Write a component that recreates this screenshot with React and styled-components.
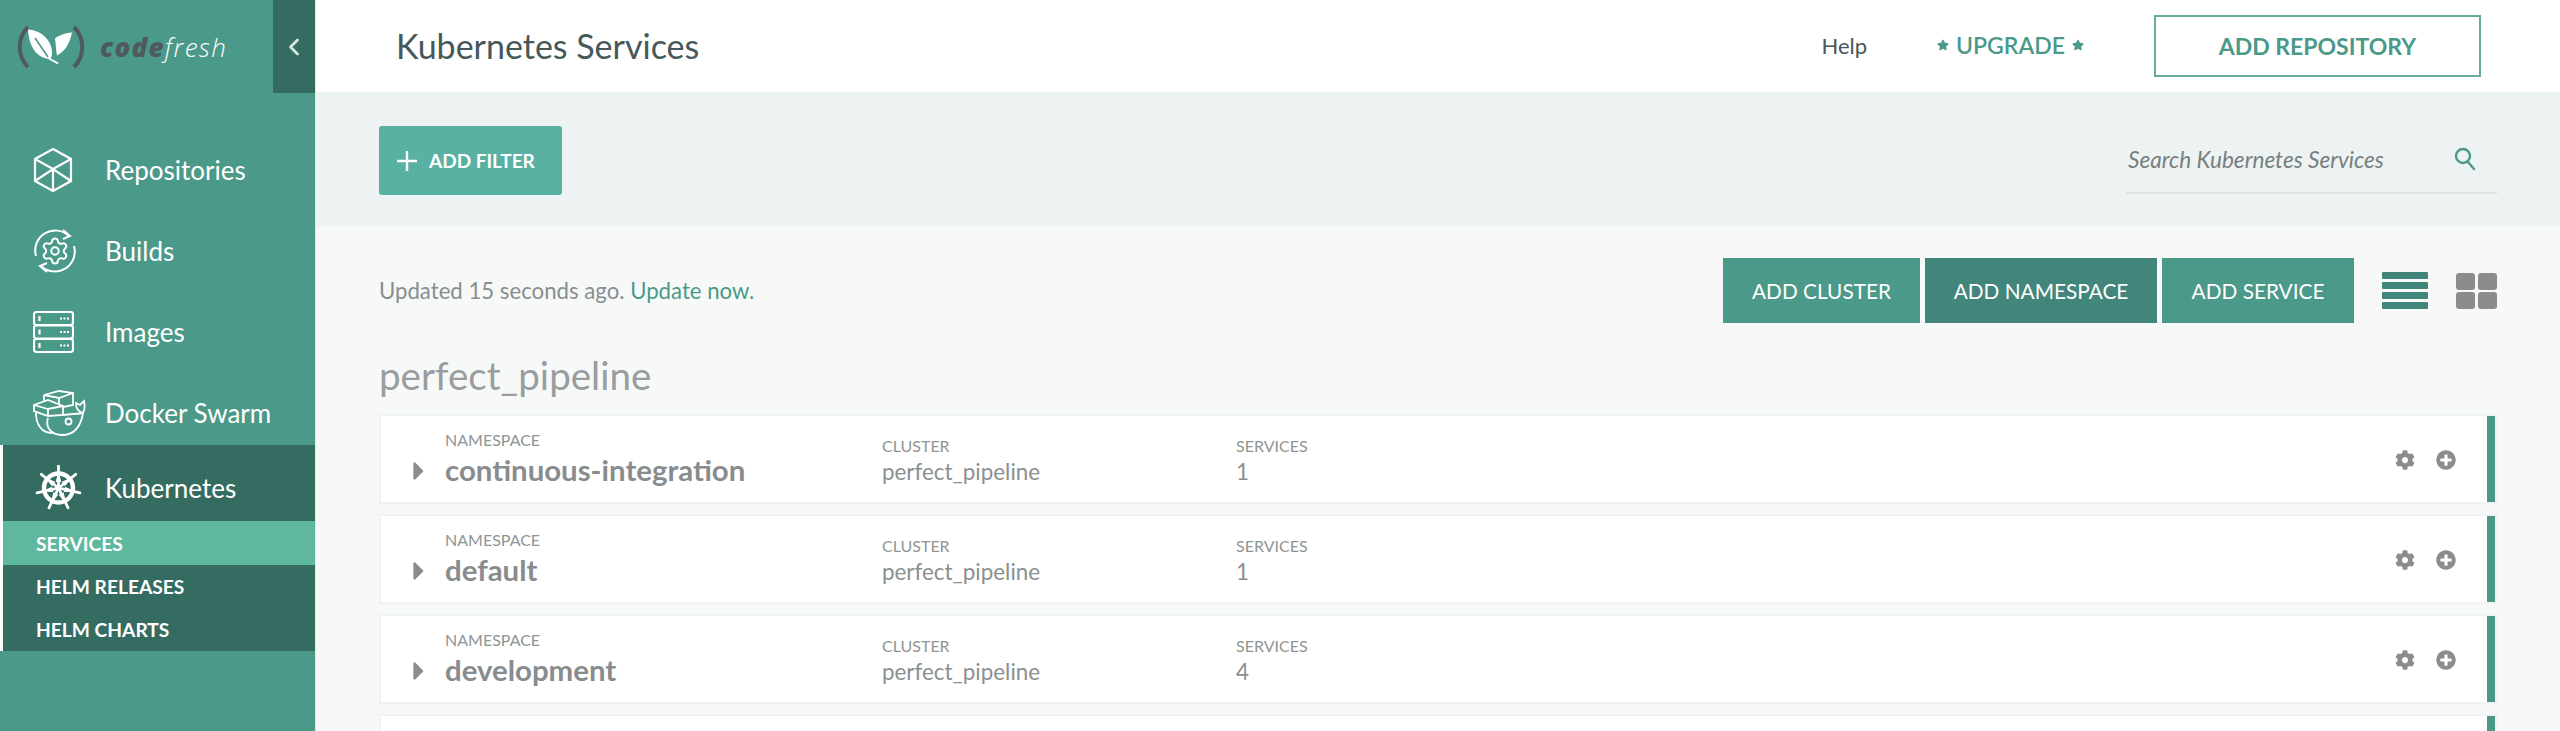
import React from "react";
import styled, { createGlobalStyle } from "styled-components";
import { ChevronLeft, Settings } from "lucide-react";
import { FaCog, FaPlusCircle, FaCaretRight, FaStar } from "react-icons/fa";

const GlobalStyle = createGlobalStyle`
  html, body {
    margin: 0;
    height: 100%;
    overflow: hidden;
  }
  body {
    font-family: Lato, "Liberation Sans", sans-serif;
    background: #f7f9f9;
  }
  * {
    box-sizing: border-box;
  }
`;

const Page = styled.div`
  display: flex;
  width: 2560px;
  height: 731px;
  overflow: hidden;
`;

const Sidebar = styled.aside`
  width: 316px;
  flex: none;
  background: #4b9989;
  border-right: 1px solid #dfeae8;
  color: #fff;
`;

const LogoBar = styled.div`
  display: flex;
  align-items: center;
  height: 93px;
  padding-left: 16px;
`;

const LogoWord = styled.div`
  margin-left: 14px;
  font-family: "Open Sans", sans-serif;
  font-style: italic;
  font-size: 26px;
  letter-spacing: 1.3px;
  color: #fff;
  font-weight: 300;
  span {
    font-weight: 800;
    color: #4f5a5c;
  }
`;

const Collapse = styled.div`
  margin-left: auto;
  width: 42px;
  height: 93px;
  background: #356c62;
  color: #d5e6e2;
  display: flex;
  align-items: center;
  justify-content: center;
`;

const Nav = styled.nav`
  display: flex;
  flex-direction: column;
  gap: 15px;
  padding-top: 44px;
`;

const NavItem = styled.a`
  display: flex;
  align-items: center;
  height: 66px;
  padding-left: 33px;
  font-size: 26px;
  color: #fff;
  svg {
    display: block;
  }
`;

const NavIcon = styled.span`
  width: 72px;
  flex: none;
`;

const KubeGroup = styled.div`
  margin-top: -1px;
  border-left: 3px solid #fff;
  background: #356c62;
`;

const KubeHead = styled.a`
  display: flex;
  align-items: center;
  height: 76px;
  padding: 10px 0 0 30px;
  font-size: 26px;
  svg {
    display: block;
    margin-left: 2px;
  }
`;

const SubItem = styled.a`
  display: flex;
  align-items: center;
  height: ${(p) => (p.$active ? "44px" : "43px")};
  padding-left: 33px;
  font-size: 19.2px;
  font-weight: 700;
  background: ${(p) => (p.$active ? "#5fb89e" : "transparent")};
`;

const Main = styled.main`
  flex: 1;
  min-width: 0;
  display: flex;
  flex-direction: column;
`;

const Header = styled.header`
  display: flex;
  align-items: center;
  height: 92px;
  flex: none;
  padding: 0 79px 2px 80px;
  background: #fff;
`;

const Title = styled.h1`
  margin: 0;
  font-size: 34px;
  font-weight: 400;
  color: #46585a;
`;

const HeaderLinks = styled.div`
  margin-left: auto;
  display: flex;
  align-items: center;
  gap: 70px;
`;

const Help = styled.a`
  font-size: 22px;
  color: #4a5557;
`;

const Upgrade = styled.a`
  display: flex;
  align-items: center;
  gap: 7px;
  font-size: 23px;
  font-weight: 600;
  color: #4b9989;
  svg {
    font-size: 12px;
  }
`;

const OutlineButton = styled.button`
  width: 327px;
  height: 62px;
  margin-top: 2px;
  border: 2px solid #6aa99e;
  background: #fff;
  color: #4b9989;
  font-family: inherit;
  font-size: 23px;
  font-weight: 700;
`;

const FilterBar = styled.div`
  display: flex;
  align-items: flex-start;
  justify-content: space-between;
  height: 134px;
  flex: none;
  padding: 34px 63px;
  background: #ecf3f2;
`;

const FilterButton = styled.button`
  display: flex;
  align-items: center;
  gap: 12px;
  width: 183px;
  height: 69px;
  padding: 0 0 0 18px;
  border: 0;
  border-radius: 3px;
  background: #58b1a3;
  color: #fff;
  font-family: inherit;
  font-size: 19px;
  font-weight: 700;
`;

const Search = styled.div`
  display: flex;
  align-items: center;
  justify-content: space-between;
  width: 371px;
  height: 68px;
  padding: 0 21px 0 2px;
  border-bottom: 2px solid #dde3e3;
  font-size: 22.6px;
  font-style: italic;
  color: #787f80;
`;

const Content = styled.section`
  flex: 1;
  padding: 32px 63px 0;
`;

const Toolbar = styled.div`
  display: flex;
  align-items: center;
  height: 65px;
`;

const Updated = styled.p`
  margin: 0;
  font-size: 22.2px;
  color: #888e8e;
  a {
    color: #4b9989;
  }
`;

const Actions = styled.div`
  margin-left: auto;
  margin-right: 1px;
  display: flex;
  gap: 5px;
`;

const ActionButton = styled.button`
  width: ${(p) => p.$w}px;
  height: 65px;
  border: 0;
  background: ${(p) => (p.$dark ? "#42857a" : "#4b9989")};
  color: #fff;
  font-family: inherit;
  font-size: 20.8px;
`;

const ViewToggles = styled.div`
  display: flex;
  align-items: center;
  gap: 28px;
  margin-left: 27px;
`;

const LinesIcon = styled.div`
  display: grid;
  grid-auto-rows: 7px;
  gap: 3px;
  width: 46px;
  span {
    background: #42857a;
    border-radius: 1px;
  }
`;

const GridIcon = styled.div`
  display: grid;
  grid-template-columns: 19px 19px;
  grid-auto-rows: 17px;
  gap: 2px 3px;
  span {
    background: #8a8d8c;
    border-radius: 3px;
  }
`;

const GroupName = styled.h2`
  margin: 30px 0 0;
  height: 61px;
  font-size: 38.6px;
  line-height: 44px;
  font-weight: 400;
  color: #999d9d;
`;

const List = styled.div`
  display: flex;
  flex-direction: column;
  gap: 10px;
`;

const Row = styled.div`
  display: grid;
  grid-template-columns: 33px 437px 354px 1fr auto;
  align-items: end;
  height: 90px;
  padding: 0 39px 14px 31px;
  border: 2px solid #f0f3f3;
  background: #fff;
  box-shadow: inset -8px 0 0 #4b9989;
  color: #888e8e;
`;

const Caret = styled.span`
  display: flex;
  height: 34px;
  align-items: center;
  margin-left: -8px;
  font-size: 30px;
  color: #8a8d8c;
`;

const Cell = styled.div`
  display: flex;
  flex-direction: column;
`;

const Label = styled.span`
  font-size: 16px;
  line-height: 20px;
  color: #8f9595;
`;

const Name = styled.span`
  font-size: 29.4px;
  line-height: 36px;
  margin-top: 2px;
  font-weight: 700;
  color: #888c8c;
`;

const Value = styled.span`
  font-size: 22.4px;
  line-height: 32px;
  color: #8a9090;
`;

const RowIcons = styled.div`
  display: flex;
  align-items: center;
  gap: 21px;
  align-self: center;
  margin-top: 15px;
  font-size: 20px;
  color: #8a8d8c;
  svg {
    display: block;
  }
`;

const Logo = () => (
  <svg width="70" height="46" viewBox="0 0 70 46">
    <g fill="none" stroke="#4f5a5c" strokeWidth="4">
      <path d="M12 3 C1 14 1 32 12 43" />
      <path d="M58 3 C69 14 69 32 58 43" />
    </g>
    <path d="M12 5.5 C24 6 35 15 36 27 C36.4 31 35.5 33.5 34 35 C20 34 13 22 12 5.5 Z" fill="#fff" />
    <path d="M19 14 L32 33" fill="none" stroke="#4b9989" strokeWidth="1.6" />
    <path d="M33 34.5 L42 39.5" fill="none" stroke="#fff" strokeWidth="2" />
    <path d="M56 8.5 C48 9 42 12 39 14.5 C40 22 40 27 41 31.5 C50 27 54 18 56 8.5 Z" fill="#fff" />
  </svg>
);

const CubeIcon = () => (
  <svg width="40" height="44" viewBox="0 0 40 44" fill="none" stroke="#fff" strokeWidth="2.2">
    <path d="M20 1 L38 11 V33 L20 43 L2 33 V11 Z" />
    <path d="M2 11 L20 21 L38 11 M20 21 V43 M2 33 L20 21 L38 33" />
  </svg>
);

const BuildsIcon = () => (
  <svg width="44" height="44" viewBox="0 0 44 44" fill="none" stroke="#fff" strokeWidth="2">
    <path d="M3 27 A20 20 0 0 1 36 7" />
    <path d="M41 17 A20 20 0 0 1 8 37" />
    <path d="M30 1 L37 7 L30 10" />
    <path d="M14 43 L7 37 L14 34" />
    <Settings x="7" y="7" width="30" height="30" strokeWidth="1.6" color="#fff" />
  </svg>
);

const ImagesIcon = () => (
  <svg width="41" height="42" viewBox="0 0 41 42" fill="none" stroke="#fff" strokeWidth="2.2">
    {[1, 14.5, 28].map((y) => (
      <g key={y}>
        <rect x="1" y={y} width="39" height="13" rx="2.5" />
        <path d={`M6.5 ${y + 4} v5`} />
        <path d={`M27 ${y + 6.5} h9`} strokeDasharray="2 1.5" />
      </g>
    ))}
  </svg>
);

const DockerIcon = () => (
  <svg width="53" height="46" viewBox="0 0 53 46" fill="none" stroke="#fff" strokeWidth="1.8">
    <path d="M11 5 L26 1 L40 3 V15 L30 17 M11 5 L26 8 L40 3 M26 8 V14 M11 5 V11" />
    <path d="M1 15 L15 10 L30 16 V25 L15 26 L1 21 Z M1 15 L15 19 L30 16 M15 19 V26" />
    <path d="M3 23 C3 35 9 43 19 43 M15 28 C12 37 18 45 29 45 C42 45 48 35 50 23" />
    <path d="M50 23 C45 22 43 18 43 13 L47 15 L51 11 C52 16 52 20 50 23 Z" />
    <path d="M30 25 L40 24 C42 24 45 24 50 23" />
    <circle cx="35.5" cy="31.5" r="3" />
  </svg>
);

const HelmIcon = () => (
  <svg width="47" height="46" viewBox="-23.5 -23 47 46" stroke="#fff" fill="none">
    <circle r="14.5" strokeWidth="4.4" />
    <circle r="3.4" fill="#fff" stroke="none" />
    {[0, 1, 2, 3, 4, 5, 6].map((i) => (
      <g key={i} transform={`rotate(${(i * 360) / 7})`}>
        <path d="M0 -4 V-22" strokeWidth="2.8" strokeLinecap="round" />
        <path d="M-1.6 -7 L0 -14 L1.6 -7 Z" strokeWidth="1.8" fill="#fff" />
      </g>
    ))}
  </svg>
);

const SearchIcon = () => (
  <svg width="22" height="24" viewBox="0 0 22 24" fill="none" stroke="#4b9989" strokeWidth="2.4">
    <circle cx="9" cy="9" r="7" />
    <path d="M14 15 L20 22" strokeLinecap="round" />
  </svg>
);

const PlusIcon = () => (
  <svg width="20" height="20" viewBox="0 0 20 20" stroke="#fff" strokeWidth="2.4">
    <path d="M10 0 V20 M0 10 H20" />
  </svg>
);

const namespaces = [
  { name: "continuous-integration", services: 1 },
  { name: "default", services: 1 },
  { name: "development", services: 4 },
];

export default function App() {
  return (
    <Page>
      <GlobalStyle />
      <Sidebar>
        <LogoBar>
          <Logo />
          <LogoWord>
            <span>code</span>fresh
          </LogoWord>
          <Collapse>
            <ChevronLeft size={28} strokeWidth={2.4} />
          </Collapse>
        </LogoBar>
        <Nav>
          <NavItem>
            <NavIcon><CubeIcon /></NavIcon>Repositories
          </NavItem>
          <NavItem>
            <NavIcon><BuildsIcon /></NavIcon>Builds
          </NavItem>
          <NavItem>
            <NavIcon><ImagesIcon /></NavIcon>Images
          </NavItem>
          <NavItem>
            <NavIcon><DockerIcon /></NavIcon>Docker Swarm
          </NavItem>
        </Nav>
        <KubeGroup>
          <KubeHead>
            <NavIcon><HelmIcon /></NavIcon>Kubernetes
          </KubeHead>
          <SubItem $active>SERVICES</SubItem>
          <SubItem>HELM RELEASES</SubItem>
          <SubItem>HELM CHARTS</SubItem>
        </KubeGroup>
      </Sidebar>
      <Main>
        <Header>
          <Title>Kubernetes Services</Title>
          <HeaderLinks>
            <Help>Help</Help>
            <Upgrade>
              <FaStar /> UPGRADE <FaStar />
            </Upgrade>
            <OutlineButton>ADD REPOSITORY</OutlineButton>
          </HeaderLinks>
        </Header>
        <FilterBar>
          <FilterButton>
            <PlusIcon /> ADD FILTER
          </FilterButton>
          <Search>
            Search Kubernetes Services
            <SearchIcon />
          </Search>
        </FilterBar>
        <Content>
          <Toolbar>
            <Updated>
              Updated 15 seconds ago. <a>Update now.</a>
            </Updated>
            <Actions>
              <ActionButton $w={197}>ADD CLUSTER</ActionButton>
              <ActionButton $w={232} $dark>ADD NAMESPACE</ActionButton>
              <ActionButton $w={192}>ADD SERVICE</ActionButton>
            </Actions>
            <ViewToggles>
              <LinesIcon>
                <span /><span /><span /><span />
              </LinesIcon>
              <GridIcon>
                <span /><span /><span /><span />
              </GridIcon>
            </ViewToggles>
          </Toolbar>
          <GroupName>perfect_pipeline</GroupName>
          <List>
            {namespaces.map((ns) => (
              <Row key={ns.name}>
                <Caret><FaCaretRight /></Caret>
                <Cell>
                  <Label>NAMESPACE</Label>
                  <Name>{ns.name}</Name>
                </Cell>
                <Cell>
                  <Label>CLUSTER</Label>
                  <Value>perfect_pipeline</Value>
                </Cell>
                <Cell>
                  <Label>SERVICES</Label>
                  <Value>{ns.services}</Value>
                </Cell>
                <RowIcons>
                  <FaCog />
                  <FaPlusCircle />
                </RowIcons>
              </Row>
            ))}
            <Row />
          </List>
        </Content>
      </Main>
    </Page>
  );
}
